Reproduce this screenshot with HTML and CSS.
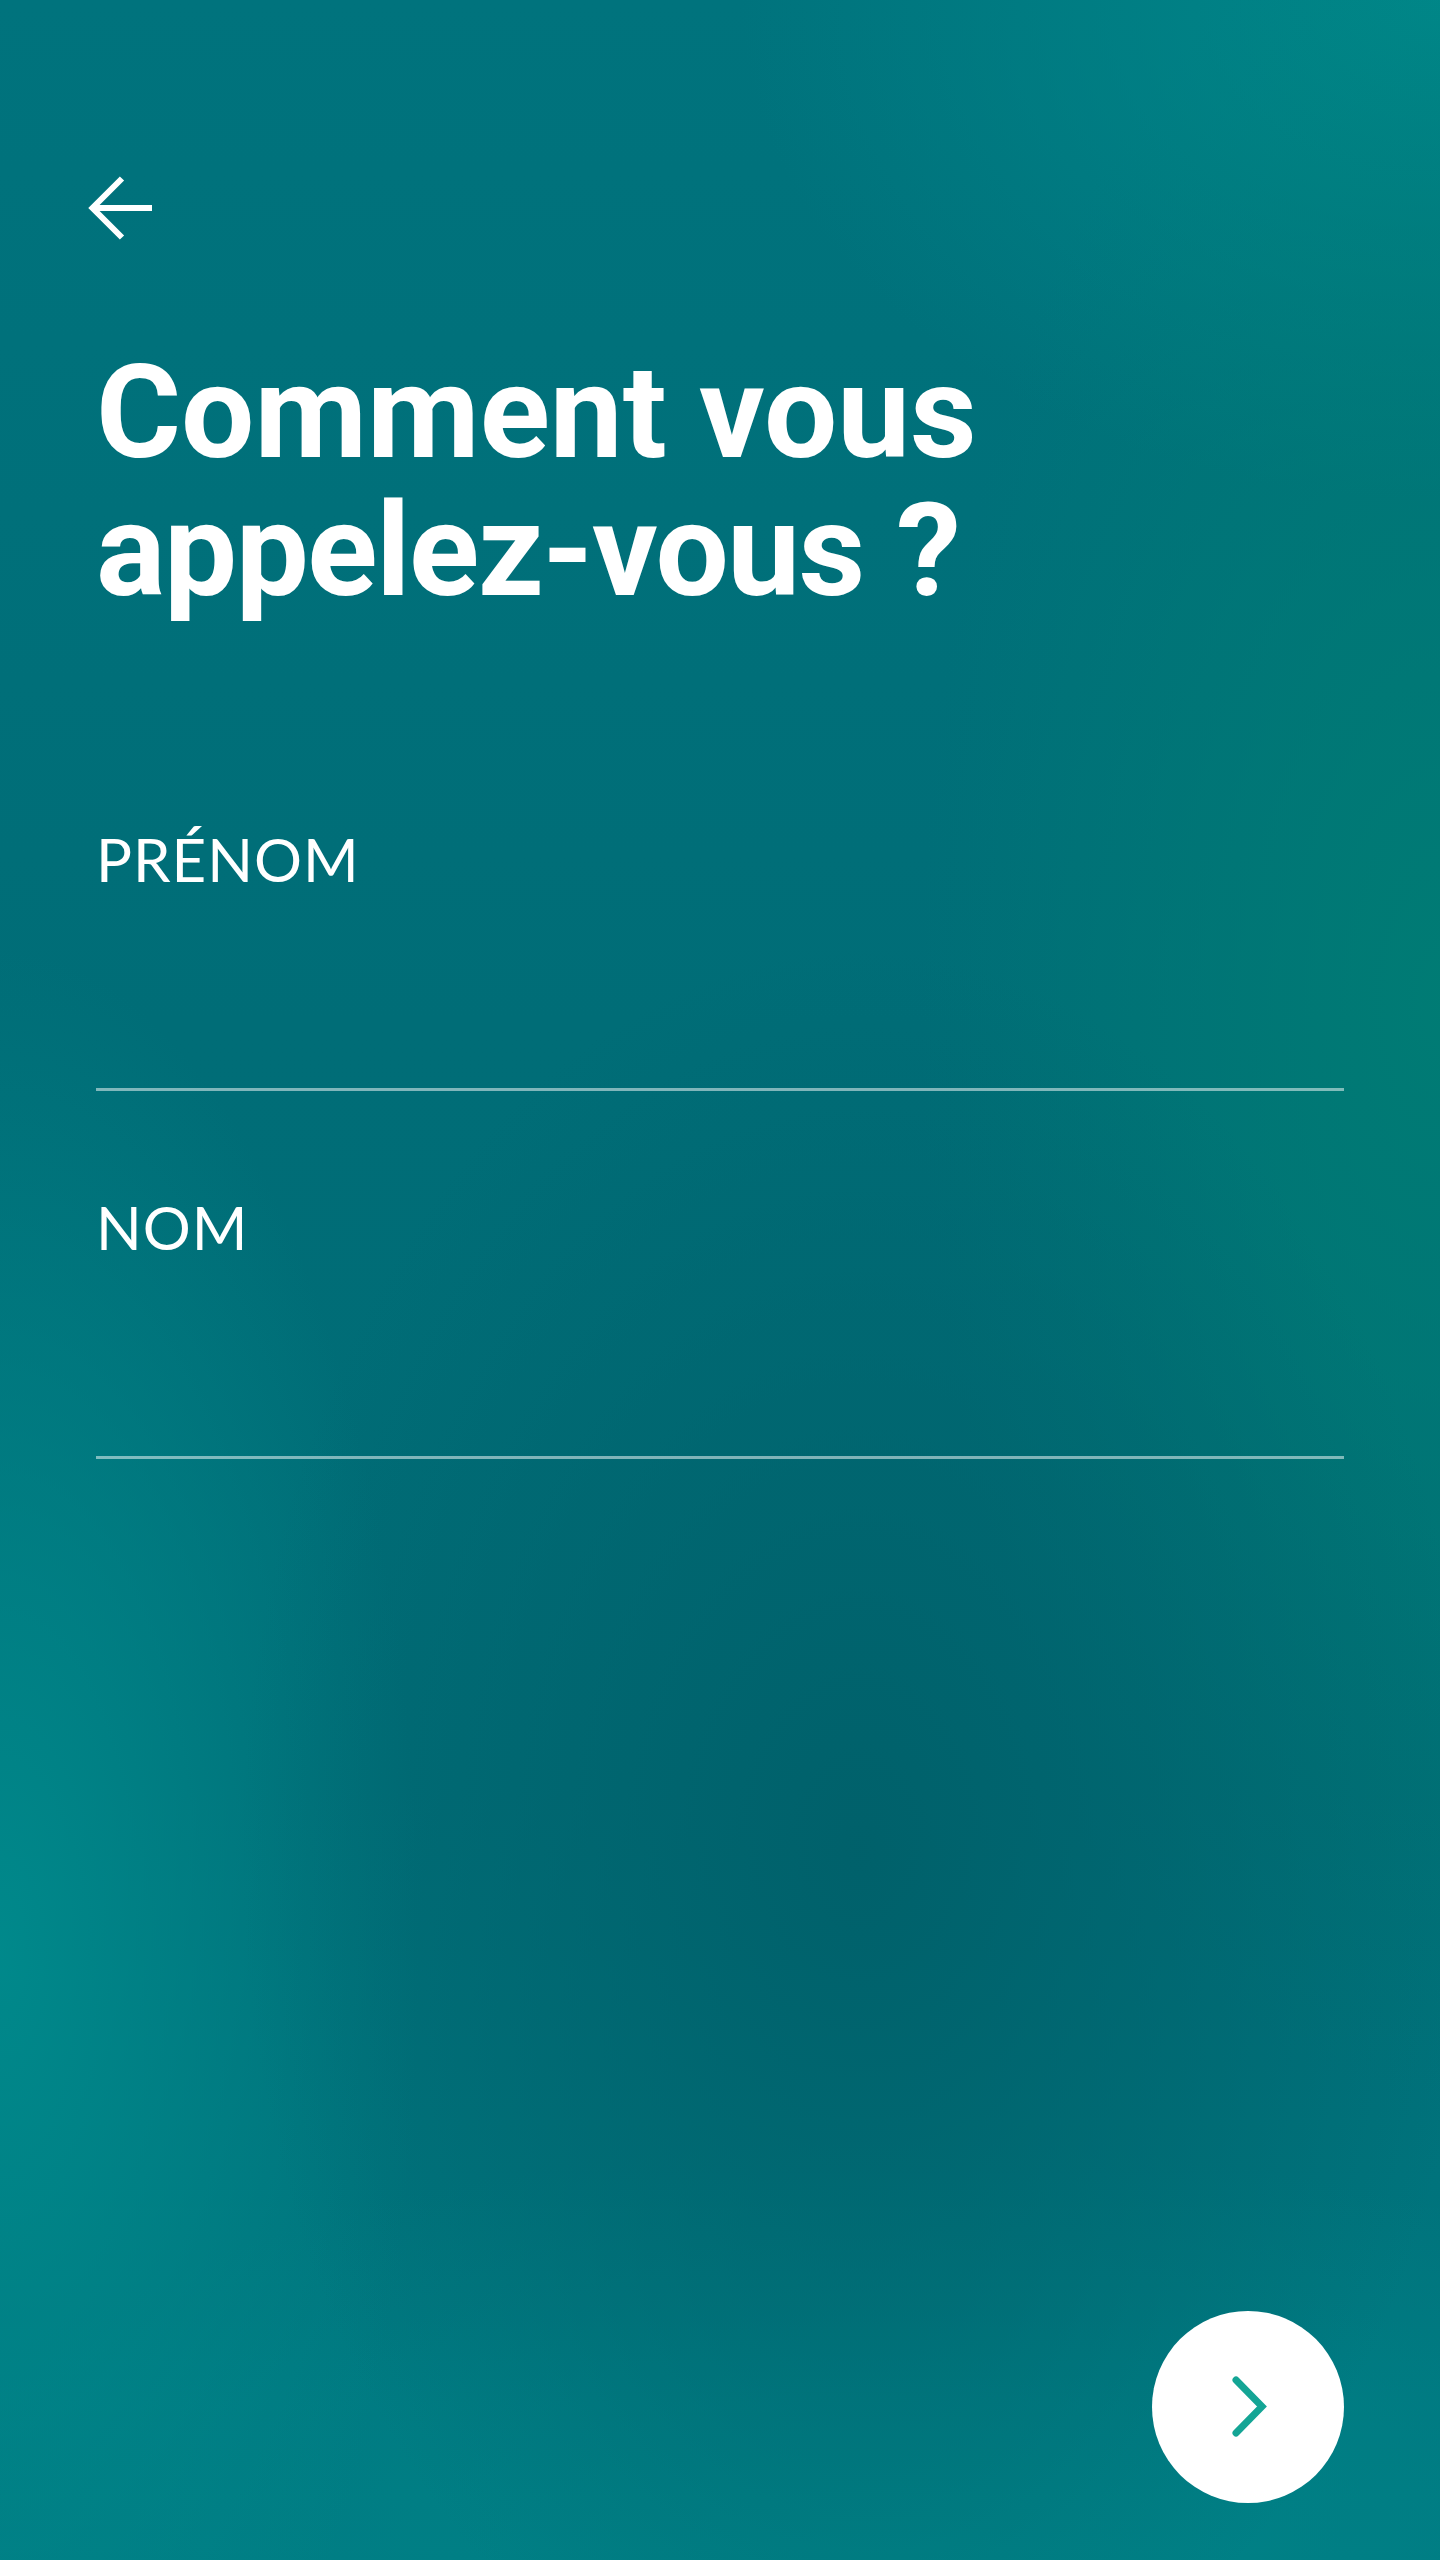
FILE: index.html
```html
<!DOCTYPE html>
<html lang="fr">
<head>
<meta charset="utf-8">
<title>Comment vous appelez-vous ?</title>
<link rel="stylesheet" href="styles.css">
</head>
<body>
<main class="screen">
  <button class="back" type="button" aria-label="Retour">
    <svg class="back-icon" width="66" height="64" viewBox="0 0 66 64" fill="none">
      <path d="M34 2.5 L4.5 32 L34 61.5 M4.5 32 H64" stroke="#fff" stroke-width="6" stroke-linejoin="miter" stroke-linecap="butt"/>
    </svg>
  </button>

  <h1 class="title">Comment vous<br><span class="title-line2">appelez-vous</span> ?</h1>

  <form class="form">
    <label class="field">
      <span class="field-label">PRÉNOM</span>
      <input class="field-input" type="text" name="prenom">
    </label>
    <label class="field">
      <span class="field-label">NOM</span>
      <input class="field-input" type="text" name="nom">
    </label>
  </form>

  <button class="next" type="button" aria-label="Suivant">
    <svg width="192" height="192" viewBox="0 0 192 192" fill="none">
      <path d="M84 69 L110 95.5 L84 122" stroke="#14a595" stroke-width="7" stroke-linecap="round" stroke-linejoin="miter"/>
    </svg>
  </button>
</main>
</body>
</html>
```

FILE: styles.css
```css
* {
  box-sizing: border-box;
}

html, body {
  margin: 0;
  padding: 0;
}

body {
  min-height: 2560px;
  background-color: #00737c;
  background-image:
    radial-gradient(ellipse 620px 900px at 860px 1850px, rgba(0, 96, 106, 0.95), rgba(0, 96, 106, 0) 100%),
    radial-gradient(ellipse 520px 1100px at 1440px 1000px, rgba(0, 126, 116, 0.85), rgba(0, 126, 116, 0) 100%),
    radial-gradient(ellipse 420px 1000px at 0px 1950px, rgba(0, 138, 140, 0.95), rgba(0, 138, 140, 0) 100%),
    radial-gradient(ellipse 700px 500px at 1440px 0px, rgba(0, 136, 138, 0.95), rgba(0, 136, 138, 0) 100%),
    radial-gradient(ellipse 1000px 420px at 900px 2560px, rgba(0, 132, 136, 0.9), rgba(0, 132, 136, 0) 100%),
    linear-gradient(180deg, #00737d 0%, #006d77 40%, #006c76 70%, #007a82 100%);
  font-family: Roboto, "Liberation Sans", Arial, sans-serif;
  color: #fff;
}

.screen {
  min-height: 2560px;
  display: flex;
  flex-direction: column;
  padding: 176px 96px 57px 96px;
}

.back {
  align-self: flex-start;
  margin: 0 0 0 -8px;
  padding: 0;
  border: 0;
  background: none;
  width: 66px;
  height: 64px;
  cursor: pointer;
}

.back-icon {
  display: block;
  overflow: visible;
}

.title {
  margin: 104px 0 0 0;
  font-family: Roboto, "Liberation Sans", Arial, sans-serif;
  font-weight: 700;
  font-size: 130px;
  line-height: 138px;
  letter-spacing: 0;
  color: #fff;
}

.title-line2 {
  letter-spacing: -1.5px;
}

.form {
  display: flex;
  flex-direction: column;
  gap: 101px;
  margin-top: 204px;
}

.field {
  display: flex;
  flex-direction: column;
}

.field-label {
  font-family: Lato, "Liberation Sans", Arial, sans-serif;
  font-weight: 400;
  font-size: 60px;
  line-height: 70px;
  letter-spacing: 1px;
  color: #fff;
}

.field-input {
  height: 197px;
  padding: 0;
  margin: 0;
  border: 0;
  border-bottom: 3px solid rgba(255, 255, 255, 0.5);
  background: transparent;
  color: #fff;
  font-family: Lato, "Liberation Sans", Arial, sans-serif;
  font-size: 58px;
  outline: none;
}

.next {
  margin-top: auto;
  align-self: flex-end;
  width: 192px;
  height: 192px;
  padding: 0;
  border: 0;
  border-radius: 50%;
  background: #fff;
  cursor: pointer;
}

.next svg {
  display: block;
}
```
